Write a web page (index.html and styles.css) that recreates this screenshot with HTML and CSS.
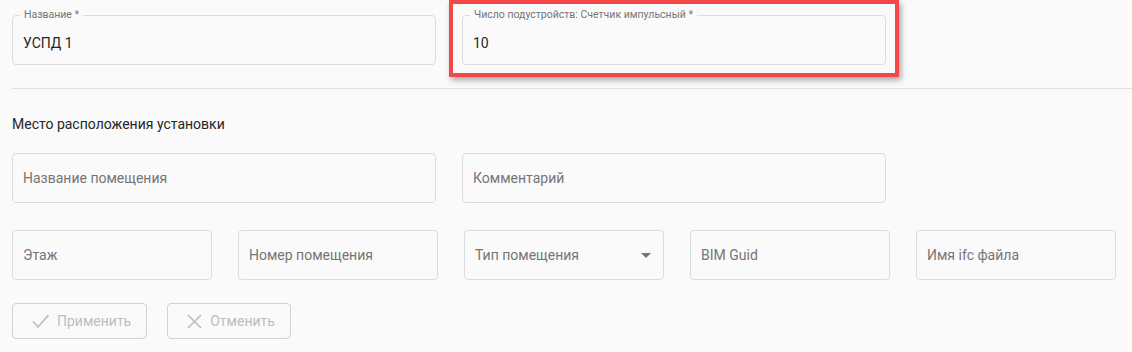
FILE: index.html
```html
<!DOCTYPE html>
<html lang="ru">
<head>
  <meta charset="UTF-8" />
  <title>УСПД</title>
  <link rel="stylesheet" href="styles.css">
</head>
<body>
  <div class="form">
    <!-- main params -->
    <div class="row">
      <div class="field wide filled">
        <span class="label">Название *</span>
        <span class="value">УСПД 1</span>
      </div>
      <div class="field wide filled marked">
        <span class="label">Число подустройств: Счетчик импульсный *</span>
        <span class="value">10</span>
      </div>
    </div>

    <hr class="divider" />

    <div class="section-title">Место расположения установки</div>

    <div class="row">
      <div class="field wide"><span class="ph">Название помещения</span></div>
      <div class="field wide"><span class="ph">Комментарий</span></div>
    </div>

    <div class="row row-small">
      <div class="field narrow"><span class="ph">Этаж</span></div>
      <div class="field narrow"><span class="ph">Номер помещения</span></div>
      <div class="field narrow select"><span class="ph">Тип помещения</span><span class="arrow"></span></div>
      <div class="field narrow"><span class="ph">BIM Guid</span></div>
      <div class="field narrow"><span class="ph">Имя ifc файла</span></div>
    </div>

    <!-- actions -->
    <div class="actions">
      <button class="btn" disabled>
        <svg width="17" height="14" viewBox="0 0 17 14"><path d="M1 7.5 6 13 16.5 1" fill="none" stroke="currentColor" stroke-width="1.6"/></svg>
        Применить
      </button>
      <button class="btn" disabled>
        <svg width="15" height="15" viewBox="0 0 15 15"><path d="M1 1 14 14M14 1 1 14" fill="none" stroke="currentColor" stroke-width="1.6"/></svg>
        Отменить
      </button>
    </div>
  </div>
</body>
</html>
```

FILE: styles.css
```css
:root{--bg:#fafafa;--border:#dcdcdc;--text:#262626;--muted:#757575;--disabled:#bdbdbd;--red:#f44848}
*{box-sizing:border-box;margin:0;padding:0}
body{background:var(--bg);font-family:Roboto,"Noto Sans",sans-serif;color:var(--text);font-size:14px}
.form{padding:15px 0 0 12px}
.row{display:flex;gap:26px}
.row-small{margin-top:27px}
/* fields */
.field{position:relative;height:50px;border:1px solid var(--border);border-radius:4px;display:flex;align-items:center;padding:0 12px 0 10px;background:var(--bg)}
.field.wide{width:424px}
.field.narrow{width:200px}
.field.filled{padding-top:5px}
.label{position:absolute;left:7px;top:-7px;padding:0 4px;background:var(--bg);font-size:10.5px;line-height:12px;color:var(--muted);white-space:nowrap}
.value{font-size:14px;color:var(--text)}
.ph{font-size:14px;color:var(--muted);white-space:nowrap}
.select .arrow{margin-left:auto;width:0;height:0;border-left:5px solid transparent;border-right:5px solid transparent;border-top:5px solid var(--muted)}
/* red highlight over the field */
.marked::after{content:"";position:absolute;left:-14px;right:-14px;top:-16px;bottom:-13px;border:4px solid var(--red);box-shadow:2px 3px 6px rgba(0,0,0,.35)}
.divider{border:0;border-top:1px solid #e0e0e0;margin:23px 0 0}
.section-title{font-size:14px;line-height:20px;margin:25px 0 19px;color:var(--text)}
/* buttons */
.actions{display:flex;gap:20px;margin-top:23px}
.btn{display:inline-flex;align-items:center;gap:8px;height:36px;padding:0 15px 0 19px;border:1px solid #d2d2d2;border-radius:4px;background:transparent;color:var(--disabled);font-family:Roboto,sans-serif;font-size:14px}
.btn svg{display:block}
```
